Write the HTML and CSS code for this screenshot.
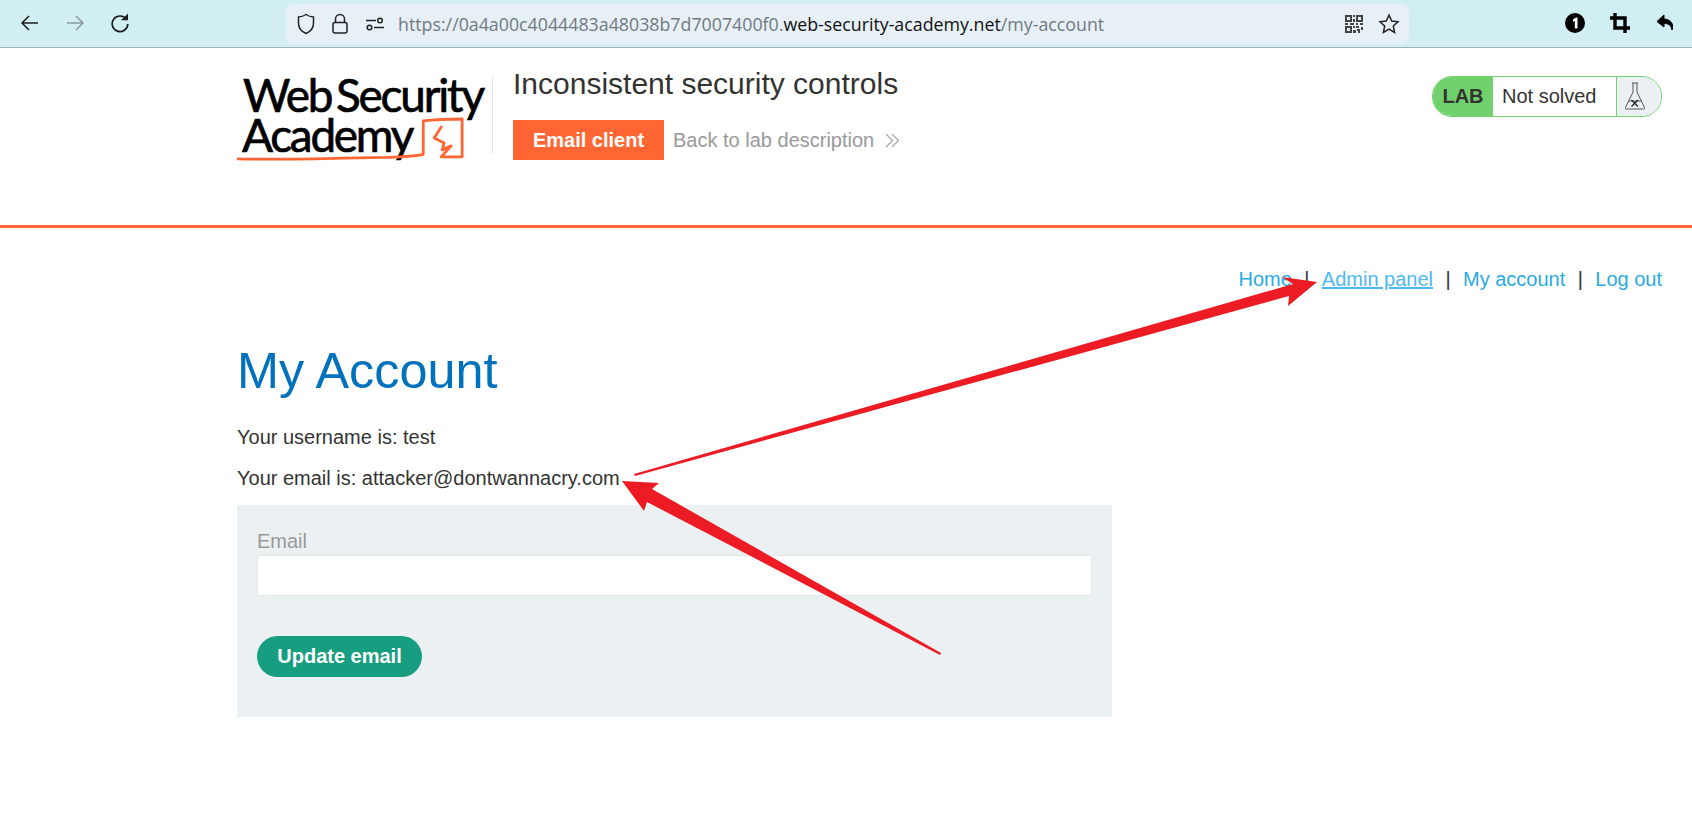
FILE: index.html
```html
<!DOCTYPE html>
<html lang="en">
<head>
<meta charset="utf-8">
<title>Inconsistent security controls</title>
<link rel="stylesheet" href="styles.css">
</head>
<body>
<div class="browser">
  <div class="nav-icons">
    <svg class="ico" width="20" height="20" viewBox="0 0 20 20"><path d="M18 10H2M9 3l-7 7 7 7" class="st"/></svg>
    <svg class="ico" width="20" height="20" viewBox="0 0 20 20"><path d="M2 10h16M11 3l7 7-7 7" class="st st-dim"/></svg>
    <svg class="ico" width="20" height="20" viewBox="0 0 20 20"><path d="M16.500 6.500A7.800 7.800 0 1 0 17.800 11" class="st st-heavy"/><path d="M11 7.300h7V.5z" class="fill"/></svg>
  </div>
  <div class="urlbar">
    <svg class="u-shield" width="18" height="22" viewBox="0 0 18 22"><path d="M9 1.500c2.500 1.700 5 2.400 7.500 2.600v6c0 5-3 8.600-7.500 10.400C4.500 18.700 1.500 15.100 1.500 10.100v-6C4 3.900 6.500 3.200 9 1.500z" class="st-thin"/></svg>
    <svg class="u-lock" width="16" height="22" viewBox="0 0 16 22"><path d="M3.500 9.500V6a4.500 4.500 0 0 1 9 0v3.500" class="st-thin"/><rect x="1" y="9.500" width="14" height="10.500" rx="2" class="st-thin"/></svg>
    <svg class="u-tune" width="18" height="14" viewBox="0 0 18 14"><path d="M0 3.500h10M8 10.500h10" class="st-thin"/><circle cx="14" cy="3.500" r="2.300" class="st-thin"/><circle cx="3.500" cy="10.500" r="2.300" class="st-thin"/></svg>
    <div class="url"><span class="dim">https://0a4a00c4044483a48038b7d7007400f0.</span>web-security-academy.net<span class="dim">/my-account</span></div>
    <svg class="u-qr" width="18" height="18" viewBox="0 0 18 18"><path d="M0 0h7v7H0zM11 0h7v7h-7zM0 11h7v7H0z" fill="#444"/><path d="M2 2h3v3H2zM13 2h3v3h-3zM2 13h3v3H2z" fill="#e8f0f7"/><path d="M8 0h2v2H8zM8 4h2v3H8zM0 8h3v2H0zM5 8h4v2H5zM11 8h2v2h-2zM15 8h3v2h-3zM8 11h2v2H8zM11 11h3v2h-3zM16 12h2v3h-2zM8 15h3v3H8zM12 14h3v2h-3zM13 16h2v2h-2z" fill="#444"/></svg>
    <svg class="u-star" width="22" height="22" viewBox="0 0 22 22"><path d="M11 2l2.700 6 6.300.7-4.700 4.300 1.300 6.500L11 16.200 5.400 19.500l1.300-6.500L2 8.700 8.300 8z" class="st-thin"/></svg>
  </div>
  <div class="ext-icons">
    <svg width="20" height="20" viewBox="0 0 20 20"><circle cx="10" cy="10" r="10" fill="#000"/><path d="M8 6.500l3-2h1.500v11h-2.700V7.800L8 9z" fill="#fff"/></svg>
    <svg width="20" height="20" viewBox="0 0 20 20"><path d="M5 0v15h15M0 5h15v15" fill="none" stroke="#000" stroke-width="3.400"/></svg>
    <svg class="undo" width="20" height="20" viewBox="0 0 20 20"><path d="M8 2L1 8.500 8 14v-3.500c4 0 7 1 8 6.500 2-6-1-10.500-8-11z" fill="#000" stroke="#000"/></svg>
  </div>
</div>

<header class="lab-header">
  <svg class="logo" width="256" height="112" viewBox="0 -12 256 112">
    <text x="6" y="38" class="logo-text" textLength="243" lengthAdjust="spacing">Web Security</text>
    <text x="5" y="78" class="logo-text" textLength="173" lengthAdjust="spacing">Academy</text>
    <path d="M1 85c40 1.500 100-1 150-1.500 14-.5 28-1 36-3V47c12-1.500 26-2 39-2v38h-21M205 53l-7 11 10 5-2 7 9-4-10 11" class="logo-mark"/>
  </svg>
  <div class="divider"></div>
  <div class="title-block">
    <h2 class="lab-title">Inconsistent security controls</h2>
    <div class="lab-actions">
      <a class="btn-email">Email client</a>
      <a class="back-link">Back to lab description</a>
      <svg class="chev" width="15" height="15" viewBox="0 0 15 15"><path d="M1 1l6.500 6.500L1 14M7 1l6.500 6.500L7 14" fill="none" stroke="#a3a3a3" stroke-width="1.100"/></svg>
    </div>
  </div>
  <div class="lab-status">
    <span class="lab-tag">LAB</span>
    <span class="lab-state">Not solved</span>
    <span class="lab-flask">
      <svg width="22" height="30" viewBox="0 0 22 30"><path d="M8 2h6M9 2v9L1.500 26.500c-.3.800 0 1.500 1 1.500h17c1 0 1.300-.7 1-1.500L13 11V2" fill="none" stroke="#444" stroke-width=".9"/><path d="M5 20h12" stroke="#444" stroke-width=".9" fill="none"/><path d="M7.500 19l6.500 6.500M14 19l-6.500 6.500" stroke="#222" stroke-width="1.300" fill="none"/></svg>
    </span>
  </div>
</header>

<nav class="top-links">
  <a>Home</a><span class="sep">|</span>
  <a class="hover">Admin panel</a><span class="sep">|</span>
  <a>My account</a><span class="sep">|</span>
  <a>Log out</a>
</nav>

<main class="content">
  <h1>My Account</h1>
  <p class="line line-first">Your username is: test</p>
  <p class="line">Your email is: attacker@dontwannacry.com</p>
  <form class="panel">
    <label class="field-label" for="email">Email</label>
    <input class="field-input" id="email" type="text">
    <button class="btn-update" type="button">Update email</button>
  </form>
</main>

<svg class="annotations" width="1692" height="813" viewBox="0 0 1692 813">
  <polygon points="634,474 1293,284 1282,277 1317,282 1288,306 1289,296 635,476" fill="#ed1c24"/>
  <polygon points="622,481 659,483 652,489 941,653 940,655 647,502 644,511" fill="#ed1c24"/>
</svg>
</body>
</html>
```

FILE: styles.css
```css
* { box-sizing: border-box; }
html, body { margin: 0; padding: 0; }
body {
  position: relative;
  height: 813px;
  overflow: hidden;
  background: #fff;
  color: #333332;
  font-family: "Liberation Sans", Arial, sans-serif;
  font-size: 20px;
}

/* Browser chrome */
.browser {
  display: flex;
  align-items: center;
  height: 48px;
  background: #d1eff3;
  border-bottom: 1px solid #9fb4ba;
  padding: 0 0 2px 20px;
}
.nav-icons { display: flex; gap: 25px; width: 266px; flex: none; }
.st { fill: none; stroke: #1c1c1c; stroke-width: 1.500; }
.st-dim { stroke: #8b9a9e; }
.st-heavy { stroke-width: 1.700; }
.fill { fill: #1c1c1c; }
.st-thin { fill: none; stroke: #222; stroke-width: 1.500; }
.urlbar {
  display: flex;
  align-items: center;
  flex: none;
  width: 1123px;
  height: 40px;
  margin-top: 2px;
  padding-left: 11px;
  background: #e8f0f7;
  border-radius: 7px;
}
.u-lock { margin-left: 17px; }
.u-tune { margin-left: 18px; }
.url {
  margin-left: 14px;
  font-family: "Open Sans", sans-serif;
  font-size: 17.800px;
  color: #111;
  white-space: nowrap;
  flex: 1;
}
.dim { color: #6f7a80; }
.u-qr { margin-right: 15px; }
.u-star { margin-right: 9px; }
.ext-icons { display: flex; flex: none; gap: 25px; margin-left: 156px; align-items: center; }
.undo { margin-left: 1px; }

/* Lab header */
.lab-header {
  display: flex;
  align-items: flex-start;
  height: 180px;
  padding: 0 30px 0 237px;
  border-bottom: 3px solid #f63;
}
.logo { margin-top: 14px; flex: none; width: 255px; }
.logo-text {
  font-family: Lato, sans-serif;
  font-size: 46px;
  word-spacing: -5px;
  fill: #000;
  stroke: #000;
  stroke-width: .7px;
}
.logo-mark {
  fill: none;
  stroke: #f63;
  stroke-width: 2.800px;
  stroke-linejoin: round;
  stroke-linecap: round;
}
.divider { width: 1px; height: 78px; margin-top: 28px; background: #e6e6e6; flex: none; }
.title-block { margin-left: 20px; flex: 1; }
.lab-title {
  margin: 19px 0 0;
  font-size: 30px;
  line-height: 33px;
  font-weight: 400;
}
.lab-actions { display: flex; align-items: center; margin-top: 20px; }
.btn-email {
  display: block;
  width: 151px;
  height: 40px;
  line-height: 40px;
  text-align: center;
  background: #f63;
  color: #fff;
  font-weight: 700;
  font-size: 20px;
}
.back-link { margin-left: 9px; color: #999; font-size: 20px; }
.chev { margin-left: 11px; }
.lab-status {
  display: flex;
  align-items: stretch;
  width: 230px;
  height: 41px;
  margin-top: 28px;
  border: 1px solid #70d16d;
  border-radius: 20px;
  overflow: hidden;
  background: #fff;
  flex: none;
}
.lab-tag {
  width: 60px;
  background: #70d16d;
  font-weight: 700;
  text-align: center;
  line-height: 39px;
}
.lab-state { width: 124px; padding-left: 9px; line-height: 38px; border-right: 1px solid #70d16d; }
.lab-flask { flex: 1; background: #ebf0f2; padding: 4px 0 0 7px; }

/* Links */
.top-links {
  display: flex;
  justify-content: flex-end;
  padding: 39px 30px 0 0;
  height: 71px;
  line-height: 24px;
}
.top-links a { color: #29abe2; }
.top-links a.hover { color: #4db8f5; text-decoration: underline; }
.sep { margin: 0 12.400px; color: #333332; }

/* Content */
.content { margin-left: 237px; width: 875px; }
h1 {
  margin: 0;
  padding-top: 43px;
  font-size: 50.400px;
  line-height: 58px;
  font-weight: 400;
  color: #0071bc;
}
.line { margin: 0; padding-top: 17px; line-height: 24px; }
.line-first { padding-top: 25px; }
.panel {
  display: block;
  height: 212px;
  margin-top: 15px;
  padding: 24px 20px 0;
  background: #ebf0f2;
}
.field-label { display: block; color: #999; line-height: 24px; height: 26px; }
.field-input {
  display: block;
  width: 100%;
  height: 41px;
  border: 1px solid #e6e6e6;
  background: #fff;
  outline: none;
}
.btn-update {
  display: block;
  width: 165px;
  height: 41px;
  margin-top: 40px;
  padding: 0;
  border: 0;
  border-radius: 21px;
  background: #179d7f;
  color: #fff;
  font-family: inherit;
  font-size: 20px;
  font-weight: 700;
}

/* Annotation overlay */
.annotations { position: absolute; left: 0; top: 0; pointer-events: none; }
```
